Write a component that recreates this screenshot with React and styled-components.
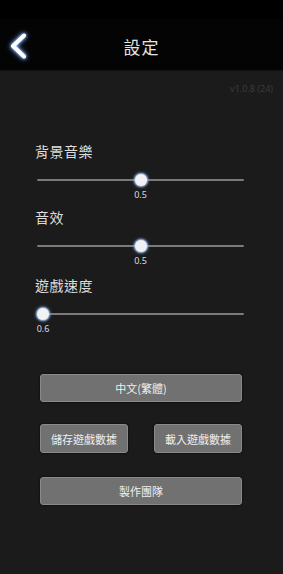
import React from "react";
import styled, { createGlobalStyle } from "styled-components";

const GlobalStyle = createGlobalStyle`
  html, body, #root {
    margin: 0;
    padding: 0;
    height: 100%;
  }
  body {
    background: #1b1b1b;
    font-family: "Noto Sans CJK TC", "Noto Sans", sans-serif;
  }
`;

const settings = [
  { label: "背景音樂", value: 0.5, pos: 0.5, space: 0 },
  { label: "音效", value: 0.5, pos: 0.5, space: 7 },
  { label: "遊戲速度", value: 0.6, pos: 0, space: 9 },
];

const App = () => {
  return (
    <Page>
      <GlobalStyle />
      <StatusBar />
      <Header>
        <BackButton>
          <svg width="34" height="40" viewBox="0 0 34 40">
            <polyline
              points="20,9.5 9,20 20,30.5"
              fill="none"
              stroke="#ffffff"
              strokeWidth="4"
              strokeLinecap="round"
              strokeLinejoin="round"
            />
          </svg>
        </BackButton>
        <Title>設定</Title>
      </Header>
      <Body>
        <Version>v1.0.8 (24)</Version>
        <Settings>
          {settings.map((s) => (
            <Setting key={s.label} $space={s.space}>
              <Label>{s.label}</Label>
              <Slider>
                <Track />
                <Thumb style={{ left: `${s.pos * 100}%` }} />
              </Slider>
              <ValueRow>
                <Value style={{ left: `${s.pos * 100}%` }}>{s.value}</Value>
              </ValueRow>
            </Setting>
          ))}
        </Settings>
        <Buttons>
          <Button>中文(繁體)</Button>
          <ButtonRow>
            <Button>儲存遊戲數據</Button>
            <Button>載入遊戲數據</Button>
          </ButtonRow>
          <Button>製作團隊</Button>
        </Buttons>
      </Body>
    </Page>
  );
};

const Page = styled.div`
  min-height: 100vh;
  display: flex;
  flex-direction: column;
  background: #1b1b1b;
`;

const StatusBar = styled.div`
  height: 19px;
  background: #000;
`;

const Header = styled.div`
  height: 52px;
  background: #040404;
  display: flex;
  align-items: center;
  justify-content: center;
  position: relative;
  border-bottom: 1px solid #111;
  box-sizing: border-box;
`;

const BackButton = styled.div`
  position: absolute;
  left: 4px;
  top: 7px;
  width: 34px;
  height: 40px;
  filter: drop-shadow(0 0 1.5px #a8caff) drop-shadow(0 0 2.5px #5d8bd8);
`;

const Title = styled.div`
  color: #e4e4e4;
  font-size: 17px;
  letter-spacing: 1px;
  padding-top: 4px;
`;

const Body = styled.div`
  flex: 1;
  display: flex;
  flex-direction: column;
  padding: 0 10px 0 35px;
`;

const Version = styled.div`
  align-self: flex-end;
  margin-top: 12px;
  font-family: "Noto Sans", sans-serif;
  font-size: 9px;
  line-height: 12px;
  color: #3b3b3b;
`;

const Settings = styled.div`
  margin-top: 46px;
  display: flex;
  flex-direction: column;
`;

const Setting = styled.div`
  margin-top: ${(p) => p.$space}px;
  display: flex;
  flex-direction: column;
`;

const Label = styled.div`
  color: #dedede;
  font-size: 14px;
  line-height: 20px;
  letter-spacing: 0.5px;
`;

const Slider = styled.div`
  margin: 10px 0 0 8px;
  width: 195px;
  height: 18px;
  position: relative;
`;

const Track = styled.div`
  position: absolute;
  left: -6px;
  right: -6px;
  top: 8px;
  height: 2px;
  background: #7a7a7a;
  border-radius: 1px;
`;

const Thumb = styled.div`
  position: absolute;
  top: 3px;
  width: 12px;
  height: 12px;
  margin-left: -6px;
  border-radius: 50%;
  background: #f2f2f2;
  box-shadow: 0 0 2px 1px #a9c6f0, 0 0 4px #5a80c0;
`;

const ValueRow = styled.div`
  margin-left: 8px;
  width: 195px;
  height: 11px;
  position: relative;
`;

const Value = styled.div`
  position: absolute;
  top: 0;
  transform: translateX(-50%);
  font-family: "Noto Sans", sans-serif;
  font-size: 9px;
  line-height: 11px;
  color: #dcdcdc;
`;

const Buttons = styled.div`
  margin: 40px 0 0 5px;
  width: 202px;
  display: flex;
  flex-direction: column;
  gap: 22px;
`;

const ButtonRow = styled.div`
  display: flex;
  justify-content: space-between;
  margin-bottom: 2px;

  & > div {
    width: 88px;
    height: 29px;
  }
`;

const Button = styled.div`
  height: 28px;
  box-sizing: border-box;
  display: flex;
  align-items: center;
  justify-content: center;
  background: #717171;
  border: 1px solid #8a8a8a;
  border-radius: 3px;
  box-shadow: 0 0 2px #000;
  color: #f0f0f0;
  font-size: 11px;
`;

export default App;
